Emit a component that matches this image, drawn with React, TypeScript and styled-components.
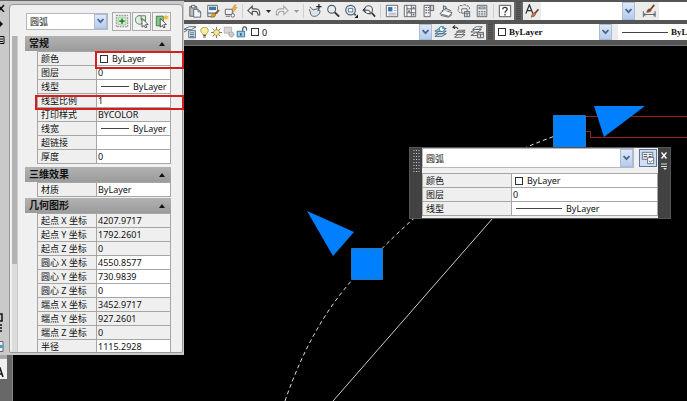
import React, { useId } from "react";
import styled, { createGlobalStyle, css } from "styled-components";

const ui = `"Noto Sans", "Noto Sans CJK SC", sans-serif`;

const GlobalStyle = createGlobalStyle`
  * { box-sizing: border-box; }
  body { margin: 0; background: #000; color: #111; font-family: ${ui}; font-size: 9px; line-height: 13px; }
  button, input, select { font: inherit; color: inherit; margin: 0; padding: 0; border: 0; border-radius: 0; background: transparent; }
  svg { display: block; flex: none; }
`;

/* ---------- layout ---------- */

const Workspace = styled.div`
  display: grid;
  grid-template-columns: 184px minmax(0, 1fr);
  height: 100vh;
  overflow: hidden;
`;

const Dock = styled.div`
  display: flex;
  flex-direction: column;
  min-height: 0;
`;

const Stage = styled.main`
  display: flex;
  flex-direction: column;
  min-width: 0;
  min-height: 0;
`;

/* ---------- shared controls ---------- */

const ComboShell = styled.div<{ $width?: number; $height: number }>`
  display: flex;
  align-items: center;
  ${(p) => (p.$width ? css`flex: none; width: ${p.$width}px;` : css`flex: 1; min-width: 0;`)}
  height: ${(p) => p.$height}px;
  background: #fff;
`;

const ComboSelect = styled.select<{ $serif?: boolean }>`
  appearance: none;
  flex: 1;
  min-width: 0;
  height: 100%;
  padding-left: 3px;
  outline: none;
  ${(p) => p.$serif && css`font-family: "Liberation Serif", serif; font-weight: 700;`}
`;

const ArrowTile = styled.span`
  display: flex;
  align-items: center;
  justify-content: center;
  flex: none;
  width: 13px;
  height: 100%;
  border: 1px solid #a9bdd8;
  background: linear-gradient(#dfe9f8, #b4ccec);
  pointer-events: none;
`;

interface ComboProps {
  label: string;
  value: string;
  width?: number;
  height: number;
  serif?: boolean;
  arrow?: boolean;
  children?: React.ReactNode;
  className?: string;
}

function Combo({ label, value, width, height, serif, arrow = true, children, className }: ComboProps) {
  return (
    <ComboShell $width={width} $height={height} className={className}>
      {children}
      <ComboSelect aria-label={label} $serif={serif}>
        <option>{value}</option>
      </ComboSelect>
      {arrow && (
        <ArrowTile>
          <svg width="7" height="6" viewBox="0 0 7 6" fill="none" stroke="#4a6590" strokeWidth="1.800">
            <path d="M.5 1 3.5 4.2 6.5 1" />
          </svg>
        </ArrowTile>
      )}
    </ComboShell>
  );
}

const PaletteCombo = styled(Combo)`
  border: 1px solid #b5b9bf;
`;

const Swatch = styled.span`
  flex: none;
  width: 8px;
  height: 8px;
  margin-left: 3px;
  border: 1px solid #333;
  background: #fff;
`;

const LineSample = styled.span<{ $width: number }>`
  flex: none;
  width: ${(p) => p.$width}px;
  height: 1px;
  margin-left: 4px;
  background: #444;
`;

/* ---------- icons ---------- */

const G = "#555b62";

const icons: Record<string, React.ReactNode> = {
  paste: (
    <>
      <path d="M2 3h8v11H2z" fill="#b9bcc0" stroke={G} />
      <path d="M4 1.5h4v3H4z" fill="#e8e8e8" stroke={G} />
      <path d="M6.5 6h5l3 3v6h-8z" fill="#f4f7fb" stroke={G} />
      <path d="M11.500 6v3h3" fill="none" stroke={G} />
    </>
  ),
  match: (
    <>
      <path d="M2 1.500h11v9H2z" fill="#fff" stroke={G} />
      <path d="M3.500 3h8v4h-8z" fill="#3c78b4" />
      <path d="M2 10.500h8v4H2z" fill="#d9dee5" stroke={G} />
      <path d="M15 7 9.500 12" stroke="#8b5a20" strokeWidth="2" />
      <path d="M6 15c0-3 2-5 4-4s1 4-4 4z" fill="#df9c38" stroke="#9a6420" strokeWidth=".7" />
    </>
  ),
  block: (
    <>
      <path d="M1.500 6h8v6h-8z" fill="#f2f2f2" stroke={G} />
      <circle cx="10" cy="13" r="2" fill="#fff" stroke={G} />
      <path d="M2 14h5" stroke={G} />
      <path d="m12 1-3 5h3l-2 4 5-6h-3l2-3z" fill="#f5bc42" stroke="#c68518" strokeWidth=".6" />
    </>
  ),
  undo: <path d="M1 7.500 6 2.500v3h4c3 0 5 2 4.500 7h-2c0-3-1-4-3-4H6v3.500z" fill="#fff" stroke="#4a5058" strokeWidth="1.300" />,
  redo: <path d="M15 7.500 10 2.500v3H6c-3 0-5 2-4.500 7h2c0-3 1-4 3-4H10v3.500z" fill="#f6f6f6" stroke="#a5a8ac" strokeWidth="1.300" />,
  pan: (
    <>
      <path d="M2 3.500c2 0 2 3 4 3l5-1c1.500 0 1.500 1.500 0 1.800h2c1.500.4 1 2 0 2 1 .6.5 2-.8 2-1 3-6 3.500-8 2C2.500 12 3 9 1.500 6" fill="#dce4ea" stroke="#4a5058" />
      <path d="M12.500 0v6M9.500 3h6" stroke="#222" strokeWidth="1.400" />
    </>
  ),
  zoom: (
    <>
      <circle cx="6.500" cy="6" r="4.500" fill="#e5edf5" stroke={G} strokeWidth="1.300" />
      <path d="m10 9.500 5 5" stroke="#333" strokeWidth="2.200" />
    </>
  ),
  zoomWin: (
    <>
      <circle cx="7.500" cy="7" r="5.500" fill="#e5edf5" stroke={G} strokeWidth="1.300" />
      <path d="M5 5h5v4H5z" fill="#fff" stroke="#446a92" />
      <path d="m11.500 11 2 2" stroke={G} strokeWidth="2" />
      <path d="M16 12v4h-4z" fill="#111" />
    </>
  ),
  zoomPrev: (
    <>
      <circle cx="7.500" cy="6.500" r="4.500" fill="#eef2f6" stroke={G} strokeWidth="1.300" />
      <path d="m11 10 4 4.500" stroke="#333" strokeWidth="2" />
      <path d="M1 7h5c3 0 4 2 3 5M4 4 1 7l3 3" fill="none" stroke="#222" />
    </>
  ),
  props: (
    <>
      <path d="M1.500 1.500h13v13h-13z" fill="#fff" stroke={G} />
      <path d="M3.500 3.500h5v5h-5z" fill="#2c74b8" />
      <path d="M10 4.500h3M10 7.500h3M4 10.500h9M4 12.500h9" stroke="#99a" />
    </>
  ),
  center: (
    <>
      <path d="M1.500 1.500h13v13h-13zM4.500 1.500v13M4.500 5.500h10M9.500 1.500v13M4.500 10h10" fill="#f6f6f6" stroke={G} />
      <path d="M6 7h2v2H6zM11 3h2v2h-2zM11 11h2v2h-2z" fill="#65717d" />
    </>
  ),
  tools: (
    <>
      <path d="M3.500 1.500h7v13h-7z" fill="#eee" stroke={G} />
      <path d="M10.500 1.500h4v6h-4z" fill="#ccc" stroke={G} />
      <path d="M5 4h2M8 4h1.500M5 7h2M8 7h1.500M5 10h2M8 10h1.500" stroke={G} strokeWidth="1.300" />
    </>
  ),
  sheet: (
    <>
      <path d="m1 11 5-4 9 3-4 4z" fill="#fff" stroke={G} />
      <path d="m3 8 5-3 6 3M5 6V2l3 1v3" fill="#cbd1d7" stroke={G} />
      <path d="m2 13 9 2 4-3" fill="none" stroke={G} />
    </>
  ),
  markup: (
    <>
      <path d="M2 5c-1-3 2-4 4-3 2-2 5-1 5 0 3 0 4 2 3 4M2 5c-2 2 0 5 2 5" fill="none" stroke={G} strokeDasharray="3 1" />
      <path d="M5.500 5.500h6v5h-6z" fill="#fff" stroke={G} />
      <path d="M8.500 8.500h6v6h-6z" fill="#dce4ed" stroke={G} />
      <path d="M9 10.500h5M11.500 10.500v4" stroke={G} />
    </>
  ),
  calc: (
    <>
      <path d="M2.500 1.500h11v13h-11z" fill="#eee" stroke={G} />
      <path d="M4.500 3.500h7v2h-7z" fill="#fff" stroke={G} />
      <path d="M4 8.500h8M4 10.500h8M4 12.500h8" stroke={G} strokeDasharray="2 1" />
    </>
  ),
  help: (
    <>
      <path d="M1.500 1.500h13v13h-13z" fill="#fff" stroke="#444" />
      <path d="M5.500 6c0-3 5-3 5 0 0 2-2.500 1.500-2.500 4M8 11v2" fill="none" stroke="#333" strokeWidth="1.500" />
    </>
  ),
  textStyle: (
    <>
      <path d="M1 11 5 1l4 10M2.500 7.500h5" fill="none" stroke="#333" strokeWidth="1.500" />
      <path d="m15.500 6-4 4.500" stroke="#754221" strokeWidth="2" />
      <path d="M7 15c1-3 2-5.500 4-5s2 4-4 5z" fill="#c47a42" stroke="#754221" strokeWidth=".7" />
    </>
  ),
  dimStyle: (
    <>
      <path d="M1.500 8v7M15 8v7M2 12h13M4 10l-2 2 2 2M13 10l2 2-2 2" fill="none" stroke={G} />
      <path d="m14 1-4 5" stroke="#754221" strokeWidth="2" />
      <path d="M5 10c0-3 3-5.500 5-4.500s1 4.500-5 4.500z" fill="#8c4f2c" />
    </>
  ),
  layerProps: (
    <>
      <path d="m1 5 6-3h8l-5 3zM1 8l4-2" fill="#fff" stroke={G} />
      <path d="M6.500 6.500h8v8h-8z" fill="#dce6f0" stroke="#476581" />
      <path d="M8 9h5M8 11h5M8 13h5" stroke="#476581" />
    </>
  ),
  layers: (
    <>
      <path d="m1 13 5-3h8l-5 3zM1 10l5-3h8l-5 3zM1 7l5-3h8l-5 3z" fill="#d7ebf5" stroke="#40647e" />
      <circle cx="9" cy="4.500" r="3" fill="#fff" stroke="#277aa5" />
      <path d="M9 1.500a3 3 0 0 1 3 3H9z" fill="#5aa7ce" />
    </>
  ),
  layerPrev: (
    <>
      <path d="m3 14 4-3h8l-4 3zM3 11l4-3h8l-4 3zM5 8l3-2h7l-4 2z" fill="#fff" stroke={G} />
      <path d="M1 2.500h4l2 2M3.500.5l-2.500 2 2.500 2" fill="none" stroke="#333" strokeWidth="1.200" />
    </>
  ),
  layerState: (
    <>
      <path d="m1 12 5-3h7l-4 3zM1 8l5-3h7l-4 3zM3 5l4-3h7l-4 3z" fill="#fff" stroke={G} />
      <path d="M8.500 8.500h7v6h-7z" fill="#dce4ed" stroke={G} />
      <path d="M9 10.500h6M12 10.500v4" stroke={G} />
    </>
  ),
  bulb: (
    <>
      <path d="M5.500 11c0-2-3-3-3-6 0-6 11-6 11 0 0 3-3 4-3 6z" fill="#fbefa0" stroke="#8a7a36" />
      <path d="M6 12.500h4M6 14.500h4" stroke="#555" strokeWidth="1.500" />
    </>
  ),
  sun: (
    <>
      <path d="M8 0v16M0 8h16M2.300 2.300l11.400 11.400M13.700 2.300 2.300 13.700" stroke="#7d6d42" strokeWidth="1.300" />
      <circle cx="8" cy="8" r="4.300" fill="#f9e79a" stroke="#8f7b3b" />
    </>
  ),
  viewport: (
    <>
      <path d="M1.500 1.500h10v8h-10z" fill="#d8d8d8" stroke="#aaa" />
      <circle cx="11" cy="11" r="3" fill="#eee" stroke="#aaa" strokeWidth="1.500" />
      <path d="M11 6v10M6 11h10" stroke="#bbb" />
    </>
  ),
  lock: (
    <>
      <path d="M9 7V3.500c0-3 5-3 5 0V6" fill="none" stroke="#38596e" strokeWidth="1.600" />
      <path d="M1.500 7h10v7.500h-10z" fill="#8fd0ee" stroke="#23556f" />
      <path d="M6.500 9.500v3" stroke="#123" strokeWidth="1.600" />
    </>
  ),
  pickAdd: (
    <>
      <path d="M1.500 1.500h13v13h-13z" fill="#eef5ee" stroke="#777" strokeDasharray="2 1" />
      <path d="M3.500 3.500h9v9h-9z" fill="#d5ecd3" stroke="#9cc09a" />
      <path d="M8 5v6M5 8h6" stroke="#268a2c" strokeWidth="2" />
    </>
  ),
  selectObj: (
    <>
      <path d="M7 2a5 5 0 1 0 1 9M7 2h5v6M7 2v5h5" fill="#dceedd" stroke="#527c55" />
      <path d="m8 5 7 7-3 .3 1.500 3-1.500.7-1.500-3-2.500 2z" fill="#fff" stroke="#444" />
    </>
  ),
  quickSelect: (
    <>
      <path d="M1.500 2.500h8v11h-8z" fill="#8bc58c" stroke="#2f7c36" />
      <path d="m6 5 7 7-3 .3 1.500 3-1.500.7-1.500-3-2.500 2z" fill="#fff" stroke="#444" />
      <path d="m12.500 0 .8 2.500 2.700-.5-1.800 2 1.800 2-2.700-.5-.8 2.500-.8-2.500-2.700.5 1.800-2L9 2l2.700.5z" fill="#f6b936" />
    </>
  ),
  customize: (
    <>
      <path d="M1.500 1.500h12v8h-12z" fill="#e9edf3" stroke="#5c6675" />
      <path d="M3 4h4M3 6.500h4M9 4h3M9 6.500h3" stroke="#5c6675" strokeWidth="1.300" />
      <path d="M7.500 7.500h7v7h-7z" fill="#fff" stroke="#5c6675" />
      <path d="m9 11 1.500 2 3-3" fill="none" stroke="#5c6675" />
    </>
  ),
};

function Icon({ name, size = 14 }: { name: string; size?: number }) {
  return (
    <svg width={size} height={size} viewBox="0 0 16 16" fill="none" aria-hidden="true">
      {icons[name]}
    </svg>
  );
}

/* ---------- toolbars ---------- */

const ToolbarStack = styled.header`
  display: flex;
  flex-direction: column;
  gap: 4px;
  padding: 2px 0 5px;
  background: #555;
  border-bottom: 1px solid #777;
`;

const Toolbar = styled.div<{ $height: number }>`
  display: flex;
  height: ${(p) => p.$height}px;
`;

const ToolGroup = styled.div<{ $grow?: boolean }>`
  display: flex;
  align-items: center;
  background: #ececec;
  ${(p) => (p.$grow ? css`flex: 1; min-width: 0;` : css`flex: none;`)}
`;

const ToolButton = styled.button<{ $width?: number }>`
  display: flex;
  align-items: center;
  justify-content: center;
  flex: none;
  width: ${(p) => p.$width ?? 18}px;
  height: 100%;
  overflow: hidden;
`;

const Divider = styled.span`
  flex: none;
  width: 1px;
  height: 14px;
  margin: 0 2px;
  background: #cfcfcf;
`;

const Gap = styled.span<{ $width: number }>`
  flex: none;
  width: ${(p) => p.$width}px;
`;

const Grip = styled.span`
  flex: none;
  width: 9px;
  border: solid #666;
  border-width: 0 2px;
  background: repeating-linear-gradient(#4a4a4a 0 1px, #5c5c5c 1px 2px);
`;

const StatusIcons = styled.span`
  display: flex;
  align-items: center;
  gap: 1px;
  padding-left: 3px;
`;

function Tool({ icon, label, width }: { icon: string; label: string; width?: number }) {
  return (
    <ToolButton type="button" aria-label={label} $width={width}>
      <Icon name={icon} />
    </ToolButton>
  );
}

function CaretTool({ label, color }: { label: string; color: string }) {
  return (
    <ToolButton type="button" aria-label={label} $width={10}>
      <svg width="5" height="3" viewBox="0 0 5 3"><path d="M0 0h5L2.500 3z" fill={color} /></svg>
    </ToolButton>
  );
}

function Toolbars() {
  return (
    <ToolbarStack>
      <Toolbar $height={18}>
        <ToolGroup>
          <Gap $width={2} />
          <Tool icon="paste" label="粘贴" />
          <Tool icon="match" label="特性匹配" />
          <Tool icon="block" label="块编辑器" />
          <Divider />
          <Tool icon="undo" label="放弃" />
          <CaretTool label="放弃列表" color="#222" />
          <Tool icon="redo" label="重做" />
          <CaretTool label="重做列表" color="#999" />
          <Divider />
          <Tool icon="pan" label="实时平移" />
          <Tool icon="zoom" label="实时缩放" />
          <Tool icon="zoomWin" label="窗口缩放" />
          <Tool icon="zoomPrev" label="缩放上一个" />
          <Divider />
          <Tool icon="props" label="特性" />
          <Tool icon="center" label="设计中心" />
          <Tool icon="tools" label="工具选项板" />
          <Tool icon="sheet" label="图纸集管理器" />
          <Tool icon="markup" label="标记集管理器" />
          <Tool icon="calc" label="快速计算器" />
          <Divider />
          <Tool icon="help" label="帮助" />
        </ToolGroup>
        <Grip />
        <ToolGroup $grow>
          <Tool icon="textStyle" label="文字样式" />
          <Combo label="文字样式列表" value="" width={94} height={18} />
          <Gap $width={4} />
          <Tool icon="dimStyle" label="标注样式" width={20} />
          <Combo label="标注样式列表" value="" height={18} arrow={false} />
        </ToolGroup>
      </Toolbar>
      <Toolbar $height={16}>
        <ToolGroup>
          <Tool icon="layerProps" label="图层特性" width={12} />
          <Combo label="图层" value="0" width={236} height={16}>
            <StatusIcons>
              <Icon name="bulb" size={11} />
              <Icon name="sun" size={11} />
              <Icon name="viewport" size={12} />
              <Icon name="lock" size={12} />
            </StatusIcons>
            <Swatch />
          </Combo>
          <Tool icon="layers" label="将对象的图层置为当前" />
          <Tool icon="layerPrev" label="上一个图层" />
          <Tool icon="layerState" label="图层状态管理器" />
        </ToolGroup>
        <Grip />
        <ToolGroup $grow>
          <Combo label="颜色控制" value="ByLayer" width={117} height={16} serif>
            <Swatch />
          </Combo>
          <Gap $width={6} />
          <Combo label="线型控制" value="ByLayer" height={16} serif arrow={false}>
            <LineSample $width={46} />
          </Combo>
        </ToolGroup>
      </Toolbar>
    </ToolbarStack>
  );
}

/* ---------- property tables ---------- */

interface Prop {
  name: string;
  value: string;
  sample?: "swatch" | "line";
  readOnly?: boolean;
}

const PropTable = styled.table<{ $labelWidth: number }>`
  width: 100%;
  table-layout: fixed;
  border-collapse: collapse;
  th { width: ${(p) => p.$labelWidth}px; }
`;

const NameCell = styled.th`
  height: 14px;
  padding: 0 0 0 3px;
  border: 1px solid #a6a6a6;
  background: #efefef;
  font-weight: 400;
  text-align: left;
  white-space: nowrap;
  line-height: 13px;
  label { display: block; height: 13px; }
`;

const ValueCell = styled.td<{ $muted?: boolean }>`
  height: 14px;
  padding: 0;
  border: 1px solid #a6a6a6;
  background: ${(p) => (p.$muted ? "#efefef" : "#fff")};
`;

const ValueBox = styled.div`
  display: flex;
  align-items: center;
  height: 13px;
`;

const ValueInput = styled.input<{ $inset: number }>`
  flex: 1;
  min-width: 0;
  height: 13px;
  padding-left: ${(p) => p.$inset}px;
  outline: none;
`;

function PropRows({ rows, labelWidth, line }: { rows: Prop[]; labelWidth: number; line: number }) {
  const base = useId();
  return (
    <PropTable $labelWidth={labelWidth}>
      <tbody>
        {rows.map((r, i) => (
          <tr key={r.name}>
            <NameCell scope="row">
              <label htmlFor={`${base}${i}`}>{r.name}</label>
            </NameCell>
            <ValueCell $muted={r.readOnly}>
              <ValueBox>
                {r.sample === "swatch" && <Swatch />}
                {r.sample === "line" && <LineSample $width={line} />}
                <ValueInput
                  id={`${base}${i}`}
                  defaultValue={r.value}
                  readOnly={r.readOnly}
                  $inset={r.sample ? 4 : 1}
                />
              </ValueBox>
            </ValueCell>
          </tr>
        ))}
      </tbody>
    </PropTable>
  );
}

/* ---------- docked palette ---------- */

const Palette = styled.aside`
  position: relative;
  display: flex;
  flex: 1;
  min-height: 0;
  padding: 3px 1px 2px 0;
  border-top: 1px solid #666;
  background: #c9c9c9;
`;

const PaletteRail = styled.div`
  display: flex;
  flex-direction: column;
  align-items: flex-start;
  flex: none;
  gap: 8px;
  width: 9px;
`;

const RailButton = styled.button`
  display: block;
  width: 6px;
  height: 8px;
  overflow: hidden;
`;

const RailSpacer = styled.span`
  flex: 1;
`;

const PaletteBody = styled.div`
  display: flex;
  flex: 1;
  flex-direction: column;
  min-width: 0;
  border: 1px solid #999;
  border-radius: 4px 4px 2px 2px;
  background: #f0f0f0;
`;

const PaletteHead = styled.div`
  display: flex;
  align-items: center;
  gap: 1px;
  flex: none;
  height: 31px;
  padding: 1px 11px 0 16px;
`;

const PickButton = styled.button`
  display: flex;
  align-items: center;
  justify-content: center;
  flex: none;
  width: 19px;
  height: 19px;
  border: 1px solid #aaa;
  background: #f3f3f3;
`;

const PaletteScroll = styled.div`
  display: flex;
  flex: 1;
  gap: 7px;
  min-height: 0;
  padding: 0 11px 0 2px;
  overflow: hidden;
`;

const ScrollTrack = styled.div`
  flex: none;
  width: 6px;
  border-right: 1px solid #ccc;
  background: #dcdcdc;
`;

const ScrollThumb = styled.div`
  height: 72%;
  background: #b3b3b3;
`;

const Sections = styled.div`
  flex: 1;
  min-width: 0;
`;

const Section = styled.section<{ $space: number }>`
  margin-bottom: ${(p) => p.$space}px;
`;

const SectionHead = styled.button`
  display: flex;
  align-items: center;
  justify-content: space-between;
  width: 100%;
  height: 15px;
  padding: 0 6px 0 4px;
  background: linear-gradient(#b2b2b2, #9b9b9b);
  font-size: 10px;
  font-weight: 700;
  line-height: 15px;
`;

const SectionRows = styled.div`
  padding-left: 12px;
`;

const Highlight = styled.div<{ $top: number; $left: number; $height: number }>`
  position: absolute;
  top: ${(p) => p.$top}px;
  left: ${(p) => p.$left}px;
  right: 0;
  height: ${(p) => p.$height}px;
  border: 2px solid #d3201f;
  pointer-events: none;
`;

const DockFoot = styled.div`
  flex: none;
  width: 13px;
  height: 46px;
  border-right: 1px solid #888;
  background: #686868;
`;

const FootButton = styled.button`
  display: flex;
  align-items: flex-end;
  width: 7px;
  height: 24px;
  border-top: 4px solid #a8a8a8;
  background: #f0f0f0;
  overflow: hidden;
`;

const sections: { title: string; space: number; rows: Prop[] }[] = [
  {
    title: "常规",
    space: 3,
    rows: [
      { name: "颜色", value: "ByLayer", sample: "swatch" },
      { name: "图层", value: "0" },
      { name: "线型", value: "ByLayer", sample: "line" },
      { name: "线型比例", value: "1" },
      { name: "打印样式", value: "BYCOLOR", readOnly: true },
      { name: "线宽", value: "ByLayer", sample: "line" },
      { name: "超链接", value: "" },
      { name: "厚度", value: "0" },
    ],
  },
  { title: "三维效果", space: 1, rows: [{ name: "材质", value: "ByLayer" }] },
  {
    title: "几何图形",
    space: 0,
    rows: [
      { name: "起点 X 坐标", value: "4207.9717", readOnly: true },
      { name: "起点 Y 坐标", value: "1792.2601", readOnly: true },
      { name: "起点 Z 坐标", value: "0", readOnly: true },
      { name: "圆心 X 坐标", value: "4550.8577" },
      { name: "圆心 Y 坐标", value: "730.9839" },
      { name: "圆心 Z 坐标", value: "0" },
      { name: "端点 X 坐标", value: "3452.9717", readOnly: true },
      { name: "端点 Y 坐标", value: "927.2601", readOnly: true },
      { name: "端点 Z 坐标", value: "0", readOnly: true },
      { name: "半径", value: "1115.2928" },
    ],
  },
];

function PropertiesPalette() {
  return (
    <Dock>
      <Palette aria-label="特性">
        <PaletteRail>
          <RailButton type="button" aria-label="关闭">
            <svg width="6" height="8" viewBox="0 0 6 8"><path d="M-2 1 4 8M4 1-2 8" stroke="#111" strokeWidth="1.500" /></svg>
          </RailButton>
          <RailButton type="button" aria-label="自动隐藏">
            <svg width="6" height="8" viewBox="0 0 6 8"><path d="m0 1 3 3-3 3z" fill="#111" /></svg>
          </RailButton>
          <RailButton type="button" aria-label="特性菜单">
            <svg width="6" height="8" viewBox="0 0 6 8"><path d="M0 .5h4v7H0M0 3h3M0 5.500h3" fill="none" stroke="#111" /></svg>
          </RailButton>
          <RailSpacer />
          <svg width="6" height="40" viewBox="0 0 6 40" aria-hidden="true">
            <path d="M0 1h2v7H0M0 12h2M0 15h2M0 18h2" fill="none" stroke="#111" strokeWidth="1.500" />
            <path d="M-1 28.500h4v10h-4z" fill="#e8f0f4" stroke="#666" />
            <path d="M0 32h3v3H0z" fill="#4a9ec6" />
          </svg>
        </PaletteRail>
        <PaletteBody>
          <PaletteHead>
            <PaletteCombo label="对象类型" value="圆弧" height={17} />
            <Gap $width={2} />
            <PickButton type="button" aria-label="切换 PICKADD"><Icon name="pickAdd" /></PickButton>
            <PickButton type="button" aria-label="选择对象"><Icon name="selectObj" /></PickButton>
            <PickButton type="button" aria-label="快速选择"><Icon name="quickSelect" /></PickButton>
          </PaletteHead>
          <PaletteScroll>
            <ScrollTrack><ScrollThumb /></ScrollTrack>
            <Sections>
              {sections.map((s) => (
                <Section key={s.title} $space={s.space}>
                  <SectionHead type="button" aria-expanded="true">
                    {s.title}
                    <svg width="6" height="4" viewBox="0 0 6 4"><path d="M0 4h6L3 0z" fill="#111" /></svg>
                  </SectionHead>
                  <SectionRows>
                    <PropRows rows={s.rows} labelWidth={59} line={28} />
                  </SectionRows>
                </Section>
              ))}
            </Sections>
          </PaletteScroll>
        </PaletteBody>
        <Highlight $top={50} $left={95} $height={18} />
        <Highlight $top={94} $left={35} $height={15} />
      </Palette>
      <DockFoot>
        <FootButton type="button" aria-label="多行文字">
          <svg width="7" height="12" viewBox="0 0 7 12"><path d="M-3 10 0 1l3 9M-2 7h4" fill="none" stroke="#111" strokeWidth="1.500" /></svg>
        </FootButton>
      </DockFoot>
    </Dock>
  );
}

/* ---------- drawing canvas ---------- */

const Canvas = styled.div`
  position: relative;
  flex: 1;
  min-height: 0;
  overflow: hidden;
  background: #000;
`;

const QuickPanel = styled.section`
  position: absolute;
  top: 101px;
  left: 225px;
  display: flex;
  width: 262px;
  border: 1px solid #555;
  background: #424242;
`;

const QuickGrip = styled.div`
  display: flex;
  justify-content: center;
  flex: none;
  width: 12px;
  padding-top: 2px;
`;

const QuickBody = styled.div`
  flex: 1;
  min-width: 0;
  padding-bottom: 2px;
  background: #f0f0f0;
`;

const QuickHead = styled.div`
  display: flex;
  align-items: center;
  gap: 5px;
  height: 20px;
  margin-bottom: 5px;
  padding-right: 1px;
`;

const QuickToggle = styled.button`
  display: flex;
  align-items: center;
  justify-content: center;
  width: 18px;
  height: 18px;
  border: 1px solid #56789f;
  background: #cfdef1;
`;

const QuickRail = styled.div`
  display: flex;
  flex-direction: column;
  align-items: center;
  flex: none;
  gap: 3px;
  width: 12px;
  padding-top: 3px;
`;

const quickRows: Prop[] = [
  { name: "颜色", value: "ByLayer", sample: "swatch" },
  { name: "图层", value: "0" },
  { name: "线型", value: "ByLayer", sample: "line" },
];

function QuickProperties() {
  return (
    <QuickPanel aria-label="快捷特性">
      <QuickGrip>
        <svg width="7" height="22" viewBox="0 0 7 22" aria-hidden="true">
          <path d="M1 0v22M3.500 0v22M6 0v22" stroke="#ccc" strokeDasharray="1 2" />
        </svg>
      </QuickGrip>
      <QuickBody>
        <QuickHead>
          <PaletteCombo label="选定对象" value="圆弧" height={20} />
          <QuickToggle type="button" aria-label="自定义"><Icon name="customize" /></QuickToggle>
        </QuickHead>
        <PropRows rows={quickRows} labelWidth={89} line={46} />
      </QuickBody>
      <QuickRail>
        <RailButton type="button" aria-label="关闭">
          <svg width="6" height="7" viewBox="0 0 6 7"><path d="m.5.500 5 6M5.500.500l-5 6" stroke="#fff" strokeWidth="1.500" /></svg>
        </RailButton>
        <RailButton type="button" aria-label="选项">
          <svg width="6" height="7" viewBox="0 0 6 7"><path d="M0 1h6M0 3.500h6" stroke="#ddd" /><path d="M2 5h4L4 7z" fill="#ddd" /></svg>
        </RailButton>
      </QuickRail>
    </QuickPanel>
  );
}

function Drawing() {
  return (
    <svg width="100%" height="100%" fill="none" aria-label="图形">
      <g transform="translate(-184 -46)">
        <path d="M285 401C304 346 329 302 367 264 420 208 476 161 570 131" stroke="#ddd" strokeDasharray="4 3" />
        <path d="M333 401 L500 210" stroke="#ccc" />
        <path d="M586 116.500H2000M586 131.500h4.500v6H2000" stroke="#9c2222" />
        <g fill="#0080ff" stroke="#2878bc" strokeWidth="1">
          <path d="M351.500 248.500h31v31h-31zM553.500 115.500h32v32h-32z" />
        </g>
        <path d="M307 211 354 232 333 256zM594 106h51l-41 31z" fill="#0080ff" />
      </g>
    </svg>
  );
}

export default function App() {
  return (
    <>
      <GlobalStyle />
      <Workspace>
        <PropertiesPalette />
        <Stage>
          <Toolbars />
          <Canvas>
            <Drawing />
            <QuickProperties />
          </Canvas>
        </Stage>
      </Workspace>
    </>
  );
}
